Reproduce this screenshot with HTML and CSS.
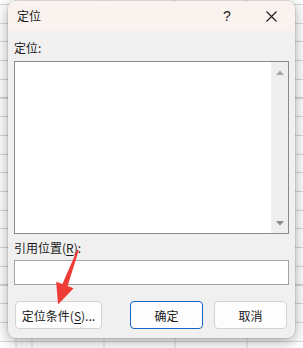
FILE: index.html
```html
<!DOCTYPE html>
<html lang="zh-CN">
<head>
<meta charset="utf-8">
<title>定位</title>
<link rel="stylesheet" href="styles.css">
</head>
<body>
<div class="sheet">
  <div class="dialog">
    <div class="titlebar">
      <span class="title">定位</span>
      <span class="help">?</span>
      <span class="close">
        <svg width="11" height="11" viewBox="0 0 11 11"><path d="M0.5 0.5 L10.5 10.5 M10.5 0.5 L0.5 10.5" stroke="#1a1a1a" stroke-width="1.1" fill="none"/></svg>
      </span>
    </div>
    <div class="content">
      <div class="label first">定位:</div>
      <div class="listbox">
        <div class="list-area"></div>
        <div class="scrollbar">
          <svg width="8" height="5" viewBox="0 0 8 5"><path d="M0 5 L4 0.5 L8 5 Z" fill="#a6a6a6"/></svg>
          <svg width="8" height="5" viewBox="0 0 8 5"><path d="M0 0 L4 4.5 L8 0 Z" fill="#8a8a8a"/></svg>
        </div>
      </div>
      <div class="label second">引用位置(<u>R</u>):</div>
      <div class="input"></div>
      <div class="buttons">
        <button class="btn wide">定位条件(<u>S</u>)...</button>
        <span class="spacer"></span>
        <button class="btn primary">确定</button>
        <button class="btn">取消</button>
      </div>
    </div>
  </div>
  <svg class="arrow" width="303" height="348" viewBox="0 0 303 348">
    <polygon points="77.4,249.6 78.8,250.2 67.6,285.9 73.6,288.3 58,304.5 56.2,281.8 62.4,284.1" fill="#ef3b36"/>
  </svg>
</div>
</body>
</html>
```

FILE: styles.css
```css
html, body {
  margin: 0;
  padding: 0;
}
body {
  width: 303px;
  height: 348px;
  overflow: hidden;
  font-family: "Noto Sans CJK SC", "Noto Sans", sans-serif;
  color: #1a1a1a;
}
.sheet {
  position: relative;
  width: 303px;
  height: 348px;
  padding: 1px 0 0 8px;
  box-sizing: border-box;
  background-color: #ffffff;
  background-image:
    repeating-linear-gradient(to right, #d6d6d6 0 1px, transparent 1px 71.7px),
    repeating-linear-gradient(to bottom, #d6d6d6 0 1px, transparent 1px 18.7px);
  background-position: 31.5px 0, 0 3.9px;
}
.dialog {
  width: 287px;
  height: 337px;
  background: #f0f0f0;
  border-radius: 8px;
  box-shadow: 0 3px 14px rgba(0, 0, 0, 0.36), 0 0 0 1px rgba(0, 0, 0, 0.07);
  overflow: hidden;
  display: flex;
  flex-direction: column;
}
.titlebar {
  height: 30px;
  background: #f9f2ef;
  display: flex;
  align-items: center;
  flex: none;
}
.title {
  font-size: 12px;
  margin-left: 9px;
  flex: 1;
  line-height: 30px;
}
.help {
  font-family: "Liberation Sans", sans-serif;
  font-size: 14px;
  width: 12px;
  text-align: center;
  margin-right: 33px;
}
.close {
  width: 11px;
  height: 11px;
  display: flex;
  margin-right: 18px;
}
.content {
  padding: 0 6px 9px 6px;
  display: flex;
  flex-direction: column;
}
.label {
  font-size: 12px;
  height: 16px;
  line-height: 16px;
}
.label.first {
  margin-top: 9px;
  margin-bottom: 5px;
}
.label.second {
  margin-top: 5px;
  height: 18px;
  line-height: 18px;
  margin-bottom: 3px;
}
.label u {
  text-decoration-thickness: 1px;
  text-underline-offset: 2px;
}
.listbox {
  height: 173px;
  border: 1px solid #858991;
  box-sizing: border-box;
  display: flex;
  background: #ffffff;
}
.list-area {
  flex: 1;
}
.scrollbar {
  width: 17px;
  background: #eeeeee;
  display: flex;
  flex-direction: column;
  align-items: center;
  justify-content: space-between;
  padding: 8px 0 7px 0;
}
.input {
  height: 25px;
  border: 1px solid #a3a3a3;
  box-sizing: border-box;
  background: #ffffff;
}
.buttons {
  margin-top: 16px;
  display: flex;
  gap: 11px;
  padding: 0 2px 0 1px;
}
.spacer {
  flex: 1;
}
.btn {
  height: 28px;
  width: 73px;
  border: 1px solid #d2d2d2;
  border-radius: 4px;
  background: #fdfdfd;
  font-family: "Noto Sans CJK SC", "Noto Sans", sans-serif;
  font-size: 12px;
  color: #1a1a1a;
  padding: 0;
  box-sizing: border-box;
}
.btn.wide {
  width: 87px;
}
.btn.primary {
  border-color: #1565c0;
}
.btn u {
  text-underline-offset: 2px;
}
.arrow {
  position: absolute;
  left: 0;
  top: 0;
  pointer-events: none;
}
```
